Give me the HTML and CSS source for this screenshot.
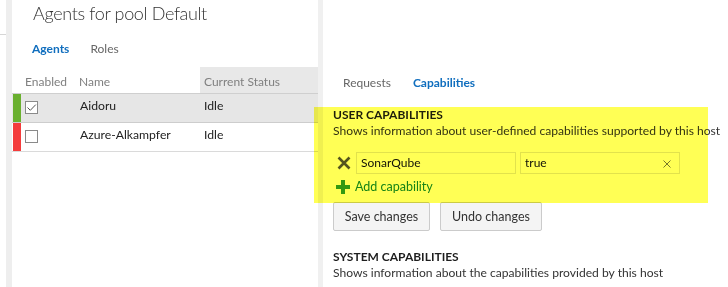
FILE: index.html
```html
<!DOCTYPE html>
<html lang="en">

<head>
    <meta charset="UTF-8">
    <meta name="viewport" content="width=device-width, initial-scale=1.0">
    <title>Agents for pool Default</title>
    <link rel="stylesheet" href="styles.css">
</head>

<body>
    <!-- Borda da navegação -->
    <div class="nav-edge"><div class="nav-edge-top"></div></div>
    <div class="nav-strip"></div>

    <!-- Painel de agentes -->
    <div class="left-pane">
        <h1 class="title">Agents for pool Default</h1>

        <div class="tabs">
            <span class="tab active">Agents</span>
            <span class="tab">Roles</span>
        </div>

        <div class="agents">
            <div class="agents-head">
                <div class="col-enabled">Enabled</div>
                <div class="col-name">Name</div>
                <div class="col-status sorted">Current Status</div>
            </div>

            <div class="agent-row selected">
                <div class="col-enabled">
                    <span class="state ok"></span>
                    <span class="checkbox">
                        <svg width="11" height="11" viewBox="0 0 11 11">
                            <path d="M1.5 5.5 L4.3 8.3 L9.8 2.6" fill="none" stroke="#555" stroke-width="1"/>
                        </svg>
                    </span>
                </div>
                <div class="col-name">Aidoru</div>
                <div class="col-status">Idle</div>
            </div>

            <div class="agent-row">
                <div class="col-enabled">
                    <span class="state off"></span>
                    <span class="checkbox"></span>
                </div>
                <div class="col-name">Azure-Alkampfer</div>
                <div class="col-status">Idle</div>
            </div>
        </div>
    </div>

    <div class="splitter"></div>

    <!-- Painel de detalhes -->
    <div class="right-pane">
        <div class="tabs detail-tabs">
            <span class="tab">Requests</span>
            <span class="tab active">Capabilities</span>
        </div>

        <div class="section">
            <h2 class="section-title">USER CAPABILITIES</h2>
            <p class="section-desc">Shows information about user-defined capabilities supported by this host</p>

            <div class="cap-row">
                <button class="cap-remove" title="Remove">
                    <svg width="14" height="14" viewBox="0 0 14 14">
                        <path d="M1.5 1.5 L12.5 12.5 M12.5 1.5 L1.5 12.5" stroke="#555" stroke-width="2.6"/>
                    </svg>
                </button>
                <div class="cap-input">SonarQube</div>
                <div class="cap-input">
                    true
                    <span class="clear">
                        <svg width="8" height="8" viewBox="0 0 8 8">
                            <path d="M0.5 0.5 L7.5 7.5 M7.5 0.5 L0.5 7.5" stroke="#777" stroke-width="1"/>
                        </svg>
                    </span>
                </div>
            </div>

            <div class="add-cap">
                <svg width="14" height="14" viewBox="0 0 14 14">
                    <path d="M5 0 H9 V5 H14 V9 H9 V14 H5 V9 H0 V5 H5 Z" fill="#339933"/>
                </svg>
                <span>Add capability</span>
            </div>

            <div class="buttons">
                <button class="button save">Save changes</button>
                <button class="button undo">Undo changes</button>
            </div>

            <h2 class="section-title system">SYSTEM CAPABILITIES</h2>
            <p class="section-desc">Shows information about the capabilities provided by this host</p>
        </div>
    </div>

    <!-- Marcador amarelo sobre a area de capacidades -->
    <div class="highlight"></div>
</body>

</html>
```

FILE: styles.css
```css
body {
    font-family: Lato, "Open Sans", sans-serif;
    font-size: 12px;
    color: #222;
    margin: 0;
    display: flex;
    height: 287px;
    overflow: hidden;
    background: white;
}

.nav-edge {
    width: 6px;
}

.nav-edge-top {
    height: 34px;
    border-bottom: 1px solid #d6d6d6;
}

.nav-strip {
    width: 6px;
    background-color: #eeeeee;
}

.left-pane {
    width: 306px;
}

.title {
    margin: 0;
    padding-left: 21px;
    font-size: 18px;
    font-weight: 300;
    letter-spacing: -0.35px;
    line-height: 24px;
    color: #333;
    padding-top: 1px;
    height: 23px;
}

.tabs {
    display: flex;
    gap: 21px;
    margin-top: 17px;
    padding-left: 20px;
    line-height: 16px;
    font-size: 12px;
}

.tab {
    color: #666;
}

.tab.active {
    color: #106ebe;
    font-weight: bold;
}

.agents {
    margin-top: 10px;
}

.agents-head,
.agent-row {
    display: grid;
    grid-template-columns: 67px 121px 1fr;
}

.agents-head {
    height: 26px;
    border-bottom: 1px solid #cfcfcf;
    color: #808080;
}

.agents-head > div {
    padding-top: 4px;
    line-height: 22px;
}

.agents-head .col-enabled {
    padding-left: 13px;
}

.agents-head .sorted {
    background-color: #e8e8e8;
}

.col-status {
    padding-left: 4px;
}

.agent-row {
    height: 28px;
    line-height: 24px;
    border-bottom: 1px solid #dadada;
    font-size: 12.2px;
}

.agent-row .col-name {
    padding-left: 1px;
}

.agent-row.selected {
    background-color: #e6e6e6;
    border-bottom-color: #cdcdcd;
}

.agent-row .col-enabled {
    display: flex;
    align-items: flex-start;
}

.state {
    width: 8px;
    height: 28px;
    margin-left: 1px;
}

.state.ok {
    background-color: #6ab02f;
}

.state.off {
    background-color: #f43c3c;
}

.checkbox {
    width: 11px;
    height: 11px;
    margin: 7px 0 0 4px;
    border: 1px solid #8a8a8a;
    background: white;
    display: flex;
}

.splitter {
    width: 5px;
    background-color: #f0f0f0;
}

.right-pane {
    flex: 1;
    white-space: nowrap;
    overflow: hidden;
}

.detail-tabs {
    margin-top: 75px;
    gap: 22px;
}

.section {
    padding-left: 10px;
}

.section-title {
    margin: 16px 0 0;
    font-size: 12px;
    line-height: 16px;
    font-weight: bold;
    color: #1e1e1e;
}

.section-desc {
    margin: 0;
    line-height: 16px;
    font-size: 12.1px;
    color: #333;
}

.cap-row {
    display: flex;
    align-items: flex-start;
    margin-top: 13px;
    height: 22px;
}

.cap-remove {
    width: 14px;
    height: 14px;
    padding: 0;
    margin: 4px 5px 0 4px;
    border: none;
    background: none;
    display: flex;
}

.cap-input {
    position: relative;
    width: 150px;
    height: 20px;
    line-height: 20px;
    padding: 0 4px;
    border: 1px solid #e2e2e2;
    color: #111;
}

.cap-input + .cap-input {
    margin-left: 4px;
}

.clear {
    position: absolute;
    right: 8px;
    top: 7px;
    display: flex;
}

.add-cap {
    display: flex;
    align-items: center;
    gap: 5px;
    margin-top: 5px;
    padding-left: 3px;
    line-height: 16px;
    color: #17843f;
    font-size: 12.5px;
}

.buttons {
    display: flex;
    gap: 10px;
    margin-top: 7px;
}

.button {
    height: 29px;
    padding: 0;
    font-family: inherit;
    font-size: 12.5px;
    color: #333;
    background-color: #f4f4f4;
    border: 1px solid #cbcbcb;
    border-radius: 2px;
}

.save {
    width: 97px;
}

.undo {
    width: 102px;
}

.section-title.system {
    margin-top: 18px;
}

/* Marcador amarelo */
.highlight {
    position: absolute;
    left: 314px;
    top: 107px;
    width: 394px;
    height: 96px;
    background-color: #ffff55;
    mix-blend-mode: multiply;
}
```
